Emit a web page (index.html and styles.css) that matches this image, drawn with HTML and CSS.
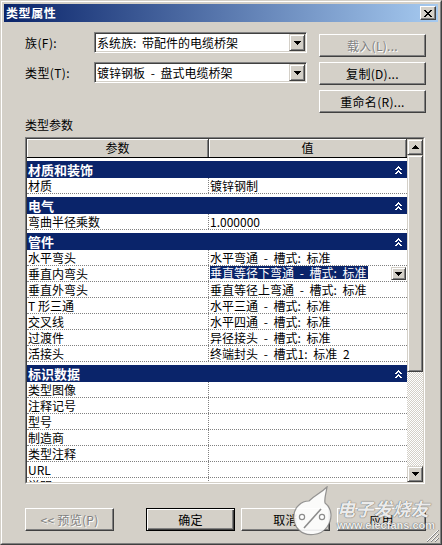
FILE: index.html
```html
<!DOCTYPE html>
<html lang="zh-CN">
<head>
<meta charset="utf-8">
<title>类型属性</title>
<link rel="stylesheet" href="styles.css">
</head>
<body>
<div class="dialog">
  <div class="frame">
    <div class="titlebar">
      <span class="title">类型属性</span>
      <span class="close"><svg width="8" height="7" viewBox="0 0 8 7"><path d="M0 0h2v1H0zM6 0h2v1H6zM1 1h2v1H1zM5 1h2v1H5zM2 2h4v1H2zM3 3h2v1H3zM2 4h4v1H2zM1 5h2v1H1zM5 5h2v1H5zM0 6h2v1H0zM6 6h2v1H6z" fill="#000"/></svg></span>
    </div>
    <div class="content">
      <div class="top">
        <div class="fields">
          <span class="label">族(F):</span>
          <div class="combo"><span class="combo-text">系统族: 带配件的电缆桥架</span><span class="drop"><svg class="arrow" width="7" height="4" viewBox="0 0 7 4"><path d="M0 0h7v1H0zM1 1h5v1H1zM2 2h3v1H2zM3 3h1v1H3z"/></svg></span></div>
          <span class="label">类型(T):</span>
          <div class="combo"><span class="combo-text">镀锌钢板 - 盘式电缆桥架</span><span class="drop"><svg class="arrow" width="7" height="4" viewBox="0 0 7 4"><path d="M0 0h7v1H0zM1 1h5v1H1zM2 2h3v1H2zM3 3h1v1H3z"/></svg></span></div>
        </div>
        <div class="side">
          <div class="btn side-btn disabled">载入(L)...</div>
          <div class="btn side-btn">复制(D)...</div>
          <div class="btn side-btn">重命名(R)...</div>
        </div>
      </div>
      <div class="section-label">类型参数</div>
      <div class="grid-box">
        <div class="grid-inner">
          <div class="grid">
            <div class="grid-head">
              <div class="hcell hparam">参数</div>
              <div class="hcell hvalue">值</div>
            </div>
            <div class="grid-body">
              <div class="group">
                <div class="cat"><span>材质和装饰</span><svg class="chev" width="7" height="9" viewBox="0 0 7 9"><path d="M3 0h1v1H3zM2 1h3v1H2zM1 2h2v1H1zM4 2h2v1H4zM0 3h2v1H0zM5 3h2v1H5zM3 4h1v1H3zM2 5h3v1H2zM1 6h2v1H1zM4 6h2v1H4zM0 7h2v1H0zM5 7h2v1H5z" fill="#fff"/></svg></div>
                <div class="row"><div class="pc">材质</div><div class="vc">镀锌钢制</div></div>
              </div>
              <div class="group">
                <div class="cat"><span>电气</span><svg class="chev" width="7" height="9" viewBox="0 0 7 9"><path d="M3 0h1v1H3zM2 1h3v1H2zM1 2h2v1H1zM4 2h2v1H4zM0 3h2v1H0zM5 3h2v1H5zM3 4h1v1H3zM2 5h3v1H2zM1 6h2v1H1zM4 6h2v1H4zM0 7h2v1H0zM5 7h2v1H5z" fill="#fff"/></svg></div>
                <div class="row"><div class="pc">弯曲半径乘数</div><div class="vc">1.000000</div></div>
              </div>
              <div class="group">
                <div class="cat"><span>管件</span><svg class="chev" width="7" height="9" viewBox="0 0 7 9"><path d="M3 0h1v1H3zM2 1h3v1H2zM1 2h2v1H1zM4 2h2v1H4zM0 3h2v1H0zM5 3h2v1H5zM3 4h1v1H3zM2 5h3v1H2zM1 6h2v1H1zM4 6h2v1H4zM0 7h2v1H0zM5 7h2v1H5z" fill="#fff"/></svg></div>
                <div class="row"><div class="pc">水平弯头</div><div class="vc">水平弯通 - 槽式: 标准</div></div>
                <div class="row"><div class="pc">垂直内弯头</div><div class="vc editing"><span class="sel">垂直等径下弯通 - 槽式: 标准</span><span class="cell-drop"><svg class="arrow" width="7" height="4" viewBox="0 0 7 4"><path d="M0 0h7v1H0zM1 1h5v1H1zM2 2h3v1H2zM3 3h1v1H3z"/></svg></span></div></div>
                <div class="row"><div class="pc">垂直外弯头</div><div class="vc">垂直等径上弯通 - 槽式: 标准</div></div>
                <div class="row"><div class="pc">T 形三通</div><div class="vc">水平三通 - 槽式: 标准</div></div>
                <div class="row"><div class="pc">交叉线</div><div class="vc">水平四通 - 槽式: 标准</div></div>
                <div class="row"><div class="pc">过渡件</div><div class="vc">异径接头 - 槽式: 标准</div></div>
                <div class="row"><div class="pc">活接头</div><div class="vc">终端封头 - 槽式1: 标准 2</div></div>
              </div>
              <div class="group">
                <div class="cat"><span>标识数据</span><svg class="chev" width="7" height="9" viewBox="0 0 7 9"><path d="M3 0h1v1H3zM2 1h3v1H2zM1 2h2v1H1zM4 2h2v1H4zM0 3h2v1H0zM5 3h2v1H5zM3 4h1v1H3zM2 5h3v1H2zM1 6h2v1H1zM4 6h2v1H4zM0 7h2v1H0zM5 7h2v1H5z" fill="#fff"/></svg></div>
                <div class="row"><div class="pc">类型图像</div><div class="vc"></div></div>
                <div class="row"><div class="pc">注释记号</div><div class="vc"></div></div>
                <div class="row"><div class="pc">型号</div><div class="vc"></div></div>
                <div class="row"><div class="pc">制造商</div><div class="vc"></div></div>
                <div class="row"><div class="pc">类型注释</div><div class="vc"></div></div>
                <div class="row"><div class="pc">URL</div><div class="vc"></div></div>
                <div class="row"><div class="pc">说明</div><div class="vc"></div></div>
              </div>
            </div>
          </div>
          <div class="vscroll">
            <div class="sbtn"><svg class="arrow" width="7" height="4" viewBox="0 0 7 4"><path d="M3 0h1v1H3zM2 1h3v1H2zM1 2h5v1H1zM0 3h7v1H0z"/></svg></div>
            <div class="thumb"></div>
            <div class="track"></div>
            <div class="sbtn"><svg class="arrow" width="7" height="4" viewBox="0 0 7 4"><path d="M0 0h7v1H0zM1 1h5v1H1zM2 2h3v1H2zM3 3h1v1H3z"/></svg></div>
          </div>
        </div>
      </div>
      <div class="bottom">
        <div class="btn bot-btn disabled">&lt;&lt; 预览(P)</div>
        <div class="btn bot-btn default b-ok">确定</div>
        <div class="btn bot-btn b-cancel">取消</div>
        <div class="btn bot-btn b-apply">应用</div>
      </div>
    </div>
  </div>
  <div class="watermark">
    <svg class="wm-logo" width="46" height="54" viewBox="0 0 46 54">
      <path d="M19 15 C25 9 31 7 37 1 C36 8 34 12 35 17 C42 22 43 33 37 41 C31 50 16 51 9 44 C2 37 2 25 9 19 C12 16 15 15 19 15 Z" fill="rgba(255,255,255,0.9)" stroke="rgba(120,120,120,0.75)" stroke-width="1.2"/>
      <path d="M14 42 L31 23" stroke="rgba(120,120,120,0.85)" stroke-width="1.6" fill="none"/>
      <circle cx="12" cy="31" r="2.6" fill="#fff" stroke="rgba(120,120,120,0.85)" stroke-width="1.2"/>
      <circle cx="32" cy="31" r="2.6" fill="#fff" stroke="rgba(120,120,120,0.85)" stroke-width="1.2"/>
    </svg>
    <div class="wm-text">
      <span class="wm-cn">电子发烧友</span>
      <span class="wm-url">www.elecfans.com</span>
    </div>
  </div>
  <svg class="grip" width="12" height="12" viewBox="0 0 12 12">
    <path d="M11 0L0 11M11 4L4 11M11 8L8 11" stroke="#fff" stroke-width="1"/>
    <path d="M12 0L0 12M12 4L4 12M12 8L8 12" stroke="#808080" stroke-width="1"/>
  </svg>
</div>
</body>
</html>
```
FILE: styles.css
```css
* {
  box-sizing: border-box;
  margin: 0;
  padding: 0;
}

html,
body {
  width: 442px;
  height: 545px;
  overflow: hidden;
  background: #d4d0c8;
}

body {
  font-family: "Noto Sans CJK SC", "Liberation Sans", sans-serif;
  font-size: 12px;
  color: #000;
}

.dialog {
  position: relative;
  width: 442px;
  height: 545px;
  border: 1px solid;
  border-color: #d4d0c8 #404040 #404040 #d4d0c8;
  background: #d4d0c8;
}

.frame {
  width: 100%;
  height: 100%;
  border: 1px solid;
  border-color: #fff #808080 #808080 #fff;
  padding: 2px;
  display: flex;
  flex-direction: column;
}

.titlebar {
  height: 18px;
  flex: none;
  display: flex;
  align-items: center;
  justify-content: space-between;
  padding: 0 2px;
  background: linear-gradient(to right, #0a246a, #a6caf0);
}

.title {
  color: #fff;
  font-weight: bold;
  font-size: 12px;
  letter-spacing: 0.6px;
  line-height: 18px;
}

.close {
  width: 16px;
  height: 14px;
  display: flex;
  align-items: center;
  justify-content: center;
  background: #d4d0c8;
  border: 1px solid;
  border-color: #fff #404040 #404040 #fff;
  box-shadow: inset -1px -1px #808080;
}

.content {
  flex: 1;
  display: flex;
  flex-direction: column;
  padding-left: 21px;
}

.top {
  display: flex;
  margin-top: 10px;
}

.fields {
  display: grid;
  grid-template-columns: 69px 213px;
  grid-auto-rows: 21px;
  row-gap: 9px;
}

.label {
  line-height: 21px;
  white-space: nowrap;
  letter-spacing: 0.4px;
}

.combo {
  display: flex;
  background: #fff;
  border: 1px solid;
  border-color: #808080 #fff #fff #808080;
  box-shadow: inset 1px 1px #404040, inset -1px -1px #d4d0c8;
  padding: 1px;
}

.combo-text {
  flex: 1;
  padding-left: 1px;
  line-height: 17px;
  white-space: nowrap;
  overflow: hidden;
  word-spacing: 3px;
}

.drop {
  width: 16px;
  flex: none;
  display: flex;
  align-items: center;
  justify-content: center;
  background: #d4d0c8;
  border: 1px solid;
  border-color: #d4d0c8 #404040 #404040 #d4d0c8;
  box-shadow: inset 1px 1px #fff, inset -1px -1px #808080;
}

.arrow {
  display: block;
  fill: #000;
}

.side {
  display: flex;
  flex-direction: column;
  gap: 5px;
  margin: 2px 0 0 12px;
}

.btn {
  display: flex;
  align-items: center;
  justify-content: center;
  background: #d4d0c8;
  border: 1px solid;
  border-color: #fff #404040 #404040 #fff;
  box-shadow: inset -1px -1px #808080;
  line-height: 21px;
  white-space: nowrap;
  letter-spacing: 0.3px;
}

.btn.disabled {
  color: #808080;
  text-shadow: 1px 1px 0 #fff;
}

.btn.default {
  border-color: #000;
  box-shadow: inset 1px 1px #fff, inset -1px -1px #404040, inset -2px -2px #808080;
}

.side-btn {
  width: 107px;
  height: 23px;
}

.section-label {
  margin-top: 5px;
  line-height: 14px;
}

.grid-box {
  margin-top: 5px;
  width: 400px;
  height: 347px;
  border: 1px solid;
  border-color: #808080 #fff #fff #808080;
}

.grid-inner {
  height: 100%;
  display: flex;
  border: 1px solid;
  border-color: #404040 #d4d0c8 #d4d0c8 #404040;
}

.grid {
  width: 380px;
  display: flex;
  flex-direction: column;
  background: #fff;
  overflow: hidden;
}

.grid-head {
  height: 19px;
  flex: none;
  display: flex;
  background: #d4d0c8;
  border-bottom: 1px solid #000;
}

.hcell {
  text-align: center;
  line-height: 18px;
  box-shadow: inset 1px 1px #fff, inset -1px 0 #808080;
  border-right: 1px solid #404040;
}

.hparam {
  width: 182px;
}

.hvalue {
  flex: 1;
}

.grid-body {
  flex: 1;
  overflow: hidden;
}

.group {
  margin-top: 3px;
}

.cat {
  height: 17px;
  display: flex;
  align-items: center;
  justify-content: space-between;
  padding: 0 5px 0 1px;
  background: #0a246a;
  color: #fff;
  font-weight: bold;
  font-size: 13px;
  line-height: 17px;
}

.chev {
  display: block;
  margin-top: 1px;
}

.row {
  height: 16px;
  display: flex;
  border-bottom: 1px dotted #808080;
  line-height: 15px;
  white-space: nowrap;
}

.pc {
  width: 182px;
  flex: none;
  padding-left: 1px;
  border-right: 1px dotted #808080;
}

.vc {
  flex: 1;
  display: flex;
  padding-left: 1px;
  word-spacing: 3px;
  overflow: hidden;
}

.sel {
  height: 13px;
  line-height: 13px;
  background: #0a246a;
  color: #fff;
  padding-right: 1px;
}

.cell-drop {
  width: 15px;
  height: 13px;
  margin: 1px 1px 0 auto;
  display: flex;
  align-items: center;
  justify-content: center;
  background: #d4d0c8;
  border: 1px solid;
  border-color: #d4d0c8 #404040 #404040 #d4d0c8;
  box-shadow: inset 1px 1px #fff, inset -1px -1px #808080;
}

.vscroll {
  width: 16px;
  display: flex;
  flex-direction: column;
}

.sbtn,
.thumb {
  flex: none;
  background: #d4d0c8;
  border: 1px solid;
  border-color: #d4d0c8 #404040 #404040 #d4d0c8;
  box-shadow: inset 1px 1px #fff, inset -1px -1px #808080;
}

.sbtn {
  height: 16px;
  display: flex;
  align-items: center;
  justify-content: center;
}

.thumb {
  height: 217px;
}

.track {
  flex: 1;
  background: repeating-conic-gradient(#fff 0 25%, #d4d0c8 0 50%) 0 0 / 2px 2px;
}

.bottom {
  display: flex;
  margin-top: 24px;
}

.bot-btn {
  width: 89px;
  height: 23px;
}

.b-ok {
  margin-left: 32px;
}

.b-cancel {
  margin-left: 6px;
}

.b-apply {
  margin-left: 7px;
}

.watermark {
  position: absolute;
  left: 289px;
  top: 485px;
  display: flex;
  align-items: flex-start;
  pointer-events: none;
}

.wm-logo {
  display: block;
}

.wm-text {
  display: flex;
  flex-direction: column;
  margin: 12px 0 0 1px;
}

.wm-cn {
  font-size: 18px;
  line-height: 21px;
  font-style: italic;
  font-weight: bold;
  letter-spacing: 0.5px;
  color: rgba(255, 255, 255, 0.9);
  text-shadow: 0 0 1px #666, 0 0 1px #666;
}

.wm-url {
  font-family: "Liberation Sans", sans-serif;
  font-size: 11px;
  line-height: 13px;
  font-weight: bold;
  color: rgba(255, 255, 255, 0.9);
  text-shadow: 0 0 1px #666, 0 0 1px #666;
}

.grip {
  position: absolute;
  right: 2px;
  bottom: 2px;
  display: block;
}
```
